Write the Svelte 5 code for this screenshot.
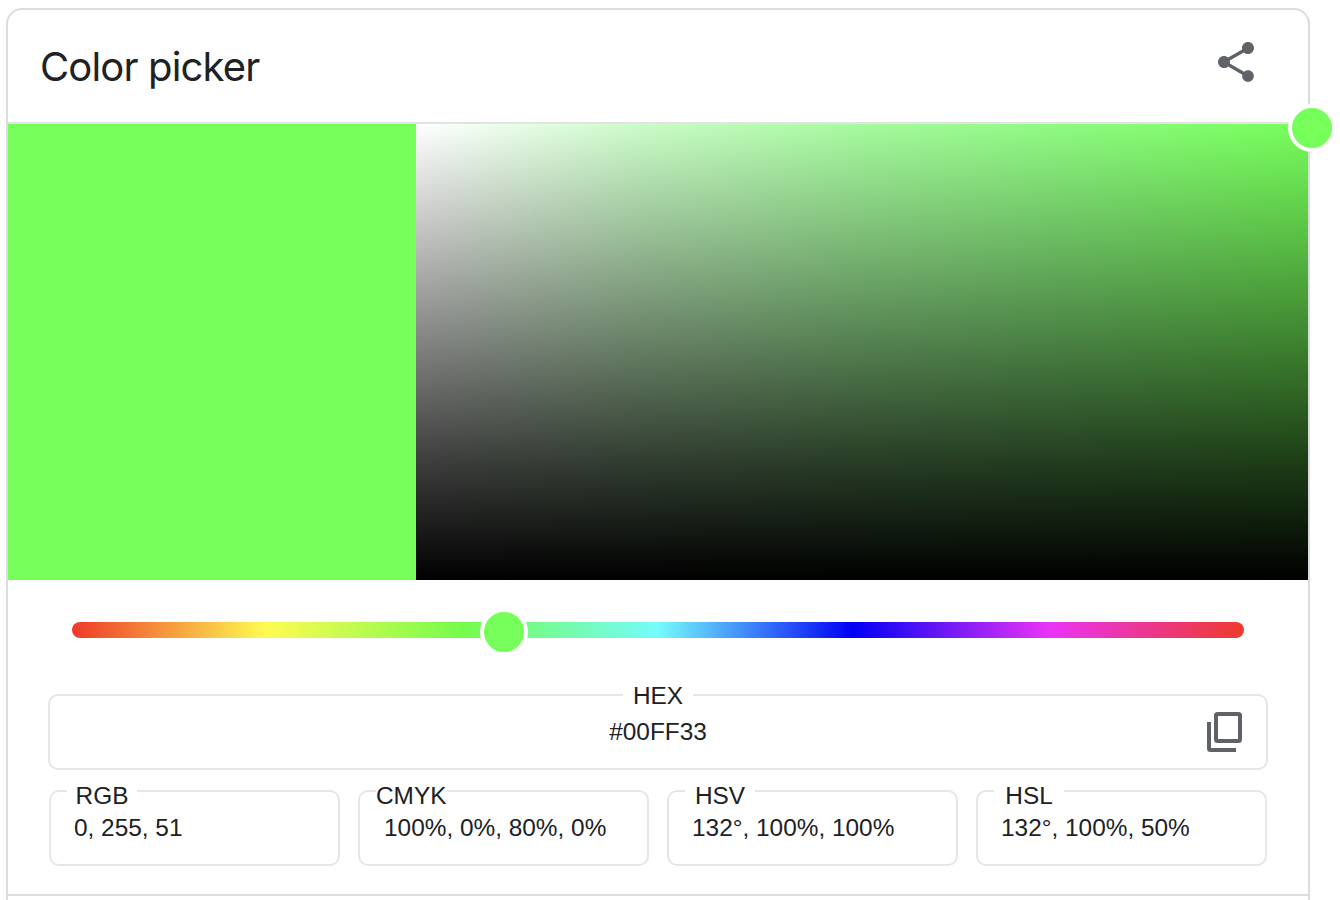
<script>
  const formats = [
    { name: "RGB", value: "0, 255, 51" },
    { name: "CMYK", value: "100%, 0%, 80%, 0%", shifted: true },
    { name: "HSV", value: "132°, 100%, 100%" },
    { name: "HSL", value: "132°, 100%, 50%" },
  ];
</script>

<div class="page">
  <section class="card">
    <header class="head">
      <h2>Color picker</h2>
      <svg class="share" viewBox="0 0 24 24" aria-label="Share">
        <path
          d="M18 16.08c-.76 0-1.44.3-1.96.77L8.91 12.7c.05-.23.09-.46.09-.7s-.04-.47-.09-.7l7.05-4.11c.54.5 1.25.81 2.04.81 1.66 0 3-1.34 3-3s-1.34-3-3-3-3 1.34-3 3c0 .24.04.47.09.7L8.04 9.81C7.5 9.31 6.79 9 6 9c-1.66 0-3 1.34-3 3s1.34 3 3 3c.79 0 1.5-.31 2.04-.81l7.12 4.16c-.05.21-.08.43-.08.65 0 1.61 1.31 2.92 2.92 2.92s2.92-1.31 2.92-2.92-1.31-2.92-2.92-2.92z"
        />
      </svg>
    </header>

    <div class="canvas">
      <div class="swatch"></div>
      <div class="plane">
        <span class="thumb plane-thumb"></span>
      </div>
    </div>

    <div class="hue">
      <span class="thumb hue-thumb"></span>
    </div>

    <div class="values">
      <fieldset class="box hex">
        <legend><span>HEX</span></legend>
        <div class="hex-row">
          <span></span>
          <span class="val">#00FF33</span>
          <svg class="copy" viewBox="0 0 40 44" aria-label="Copy">
            <rect x="12" y="4" width="24" height="27" rx="1.5" />
            <path d="M5 12V38.5a1.5 1.5 0 0 0 1.5 1.5H32" />
          </svg>
        </div>
      </fieldset>

      <div class="formats">
        {#each formats as f}
          <fieldset class="box small">
            <legend><span>{f.name}</span></legend>
            <div class="val" class:shifted={f.shifted}>{f.value}</div>
          </fieldset>
        {/each}
      </div>
    </div>

    <div class="divider"></div>
  </section>
</div>

<style>
  :global(body) {
    background: #fff;
  }

  .page {
    height: 900px;
    overflow: hidden;
    padding: 8px 30px 0 6px;
    box-sizing: border-box;
  }

  .card {
    height: 960px;
    box-sizing: border-box;
    border: 2px solid #dadce0;
    border-radius: 16px;
    font-family: "Liberation Sans", Arial, sans-serif;
    color: #202124;
  }

  .head {
    height: 112px;
    display: flex;
    align-items: center;
    justify-content: space-between;
    padding: 0 48px 0 32px;
    border-bottom: 2px solid #e2e2e2;
  }

  h2 {
    margin: 0;
    font-family: Inter, sans-serif;
    font-weight: 400;
    font-size: 40px;
    letter-spacing: -0.85px;
  }

  .share {
    width: 48px;
    height: 48px;
    margin-bottom: 8px;
    fill: #5f6368;
  }

  .canvas {
    display: flex;
    height: 456px;
  }

  .swatch {
    width: 408px;
    background: #76ff5a;
  }

  .plane {
    flex: 1;
    position: relative;
    background:
      linear-gradient(
        to top,
        #000 0%,
        rgba(0, 0, 0, 0.77) 25%,
        rgba(0, 0, 0, 0.51) 50%,
        rgba(0, 0, 0, 0.25) 75%,
        rgba(0, 0, 0, 0) 100%
      ),
      linear-gradient(to right, #fff 0%, #cbfcc8 25%, #a6fb9e 50%, #8ffb82 72%, #76ff5a 100%);
  }

  .thumb {
    position: absolute;
    width: 40px;
    height: 40px;
    box-sizing: content-box;
    border: 4px solid #fff;
    border-radius: 50%;
    background: #76ff5a;
  }

  .plane-thumb {
    top: -20px;
    right: -28px;
  }

  .hue {
    position: relative;
    height: 16px;
    margin: 42px 64px 0 64px;
    border-radius: 8px;
    background: linear-gradient(
      to right,
      #ee3a2a 0%,
      #fffb52 16.6%,
      #75fb4c 33.3%,
      #75fbfd 50%,
      #0000f5 66.6%,
      #ea33f7 83.3%,
      #ee3a2a 100%
    );
  }

  .hue-thumb {
    top: -14px;
    left: 408px;
  }

  .values {
    margin: 42px 40px 0;
  }

  .box {
    margin: 0;
    padding: 0;
    min-width: 0;
    box-sizing: border-box;
    border: 2px solid #e6e6e6;
    border-radius: 10px;
    font-size: 24.4px;
    line-height: 28px;
  }

  legend {
    width: 70px;
    padding: 2px 0 0;
  }

  legend span {
    display: block;
    text-align: center;
  }

  .hex {
    height: 90px;
  }

  .hex legend {
    margin: 0 auto;
  }

  .hex-row {
    display: grid;
    grid-template-columns: 1fr auto 1fr;
    align-items: center;
    height: 44px;
  }

  .copy {
    justify-self: end;
    width: 40px;
    height: 44px;
    margin-right: 22px;
    fill: none;
    stroke: #5f6368;
    stroke-width: 4;
  }

  .formats {
    display: grid;
    grid-template-columns: repeat(4, 1fr);
    gap: 18px;
    margin: 2px 1px 0;
  }

  .small {
    height: 94px;
  }

  .small legend {
    margin-left: 16px;
    padding-top: 10px;
  }

  .small .val {
    padding: 4px 0 0 23px;
  }

  .small .val.shifted {
    padding-left: 24px;
  }

  .divider {
    height: 2px;
    margin-top: 28px;
    background: #dadce0;
  }
</style>
